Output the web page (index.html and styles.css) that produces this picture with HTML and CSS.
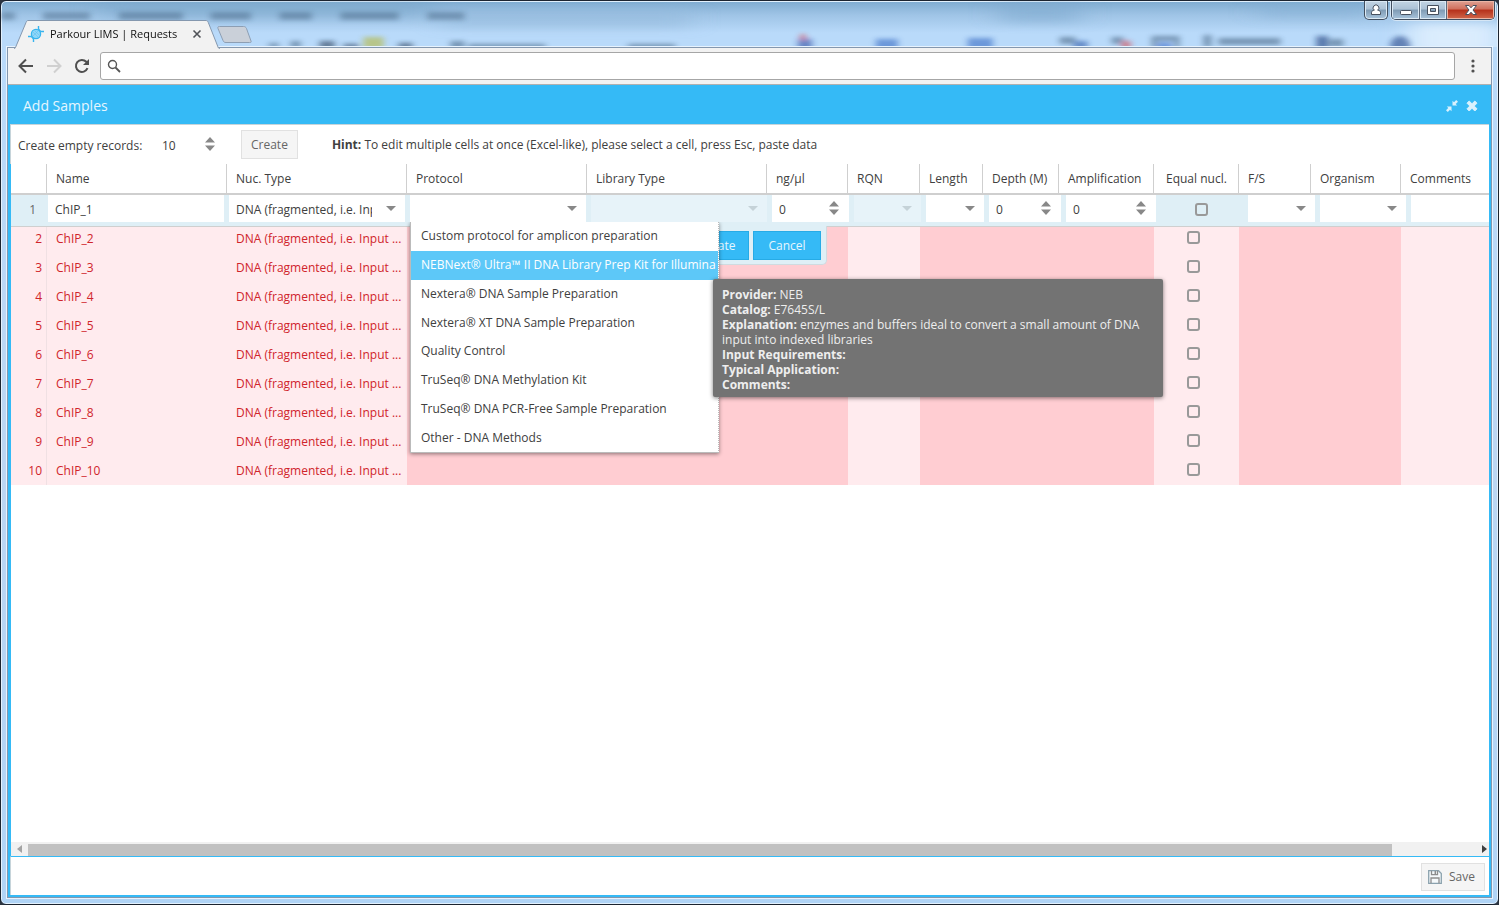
FILE: index.html
```html
<!DOCTYPE html>
<html lang="en">
<head>
<meta charset="utf-8">
<title>Parkour LIMS | Requests</title>
<link rel="stylesheet" href="styles.css">
</head>
<body>
<div class="window">
  <svg class="glass" viewBox="0 0 1499 47" preserveAspectRatio="xMinYMin slice" aria-hidden="true">
    <defs><filter id="soft" x="-5%" y="-50%" width="110%" height="200%"><feGaussianBlur stdDeviation="3 2"/></filter>
    <filter id="wide" x="-5%" y="-50%" width="110%" height="200%"><feGaussianBlur stdDeviation="14 5"/></filter></defs>
    <g filter="url(#wide)">
      <rect x="100" y="0" width="330" height="18" fill="#7aa3c8" opacity=".45"/>
      <rect x="440" y="8" width="250" height="20" fill="#8fb3d6" opacity=".4"/>
      <rect x="1000" y="2" width="80" height="20" fill="#7ba8cd" opacity=".5"/>
      <rect x="1260" y="4" width="110" height="14" fill="#7ba8cd" opacity=".35"/>
      <rect x="1410" y="22" width="90" height="30" fill="#e4f1fe" opacity=".8"/>
    </g>
    <g filter="url(#soft)" fill="#42617f" opacity=".55">
      <g opacity=".8"><rect x="0" y="11" width="14" height="8"/><rect x="42" y="11" width="47" height="8"/><rect x="118" y="11" width="64" height="8"/><rect x="210" y="11" width="40" height="8"/><rect x="279" y="11" width="32" height="8"/><rect x="340" y="11" width="58" height="8"/><rect x="427" y="11" width="37" height="8"/></g>
      <rect x="268" y="42" width="10" height="5"/><rect x="290" y="40" width="10" height="7"/><rect x="319" y="40" width="15" height="8" fill="#1c2f48"/><rect x="343" y="43" width="15" height="5" fill="#1c2f48"/><rect x="363" y="36" width="20" height="12" fill="#b5b42e"/><rect x="398" y="42" width="14" height="6" fill="#1c2f48"/>
      <rect x="450" y="40" width="14" height="8"/><rect x="468" y="43" width="77" height="6"/><rect x="628" y="43" width="47" height="6"/>
      <rect x="798" y="38" width="14" height="12" fill="#25429a"/><circle cx="803" cy="36" r="3" fill="#e03030"/><rect x="876" y="38" width="22" height="12" fill="#2f63c0"/><rect x="968" y="37" width="25" height="12" fill="#2f63c0"/>
      <rect x="1060" y="36" width="16" height="7"/><rect x="1074" y="40" width="14" height="8" fill="#224da0"/><rect x="1112" y="36" width="12" height="7"/><rect x="1122" y="40" width="9" height="8" fill="#dc3030"/><path d="M1152 35h28v12h-5v-7h-18v7h-5z"/><rect x="1158" y="42" width="14" height="6" fill="#2454c0"/>
      <rect x="1204" y="34" width="8" height="12"/><rect x="1219" y="37" width="62" height="7"/><rect x="1317" y="35" width="12" height="13" fill="#102e70"/><rect x="1330" y="38" width="14" height="8"/><circle cx="1401" cy="45" r="10" fill="#14377f"/>
    </g>
  </svg>

  <header class="titlebar">
    <div class="tab">
      <svg class="tab-shape" viewBox="0 0 206 29" aria-hidden="true"><path d="M0 28.500c1 0 1 0 1.500-1L12 2.500c1-2 1-2 3-2h176c2 0 2.500 0 3.300 2L204 27c.5 1.500 1 1.500 2 1.500" fill="#f2f2f2" stroke="#8497ae"/></svg>
      <svg class="favicon" viewBox="0 0 16 16" aria-hidden="true"><circle cx="8" cy="8" r="4.600" fill="#8fd6f8" stroke="#37b4ee" stroke-width="1.300"/><path d="M0 10.500h3l2 1.500M16 5.500h-3l-2-1.500M10.500 0v3l1.500 2M5.500 16v-3L4 11" fill="none" stroke="#37b4ee" stroke-width="1.400"/><path d="M5 6l5 5M6.500 4.500l5 5M5 10l5-5" stroke="#5fc3f2" stroke-width=".6"/></svg>
      <span class="tab-title">Parkour LIMS | Requests</span>
      <button class="tab-close" aria-label="Close tab"><svg viewBox="0 0 10 10"><path d="M1.500 1.500l7 7M8.500 1.500l-7 7" stroke="#505358" stroke-width="1.600"/></svg></button>
    </div>
    <button class="new-tab" aria-label="New tab"><svg viewBox="0 0 35 18"><path d="M1 2.500c-.5-1.500 0-2 1.500-2h24c1.500 0 2.300.5 3 2l4.500 12.500c.5 1.500 0 1.500-1.500 1.500H9c-1.500 0-2.500-.5-3-2z" fill="#cad0d9" stroke="#8d9eb3"/></svg></button>
    <div class="controls">
      <button class="ctl user" aria-label="User"><svg viewBox="0 0 14 12"><path d="M2.500 10.500V8.300C2.500 7 4 6.500 5.300 6.200a2.900 2.900 0 1 1 3.400 0C10 6.500 11.500 7 11.500 8.300v2.200z"/></svg></button>
      <div class="ctl-group">
        <button class="ctl min" aria-label="Minimize"><svg viewBox="0 0 14 12"><rect x="1.500" y="6.500" width="11" height="4" rx="1"/></svg></button>
        <button class="ctl max" aria-label="Maximize"><svg viewBox="0 0 14 12"><path fill-rule="evenodd" d="M1.500 1.500h11v9h-11zM4.500 4.500v3h5v-3z"/></svg></button>
        <button class="ctl shut" aria-label="Close"><svg viewBox="0 0 14 12"><path d="M1.500 1.500h3.500L7 3.800 9 1.500h3.500L9 6l3.500 4.500H9L7 8.200 5 10.500H1.500L5 6z"/></svg></button>
      </div>
    </div>
  </header>

  <div class="browser">
    <nav class="navbar">
      <button class="nav" aria-label="Back"><svg viewBox="0 0 16 16"><path d="M15 8H2M8 1.500L1.500 8 8 14.500" stroke="#505050"/></svg></button>
      <button class="nav" aria-label="Forward"><svg viewBox="0 0 16 16"><path d="M1 8h13M8 1.500L14.500 8 8 14.500" stroke="#d0d0d0"/></svg></button>
      <button class="nav" aria-label="Reload"><svg viewBox="0 0 16 16"><path d="M13.500 10.200A6 6 0 1 1 12.300 3.800L13.500 5" stroke="#505050"/><path d="M15 1v6H9z" fill="#505050" stroke="none"/></svg></button>
      <label class="address"><svg viewBox="0 0 14 14" aria-hidden="true"><circle cx="5.500" cy="5.500" r="4" fill="none" stroke="#555" stroke-width="1.400"/><path d="M8.500 8.500l4.500 4.500" stroke="#555" stroke-width="1.800"/></svg><input type="text" aria-label="Address"></label>
      <button class="menu" aria-label="Menu"><svg viewBox="0 0 4 14"><circle cx="2" cy="2" r="1.600"/><circle cx="2" cy="7" r="1.600"/><circle cx="2" cy="12" r="1.600"/></svg></button>
    </nav>

    <main class="panel">
      <div class="panel-head">
        <h1>Add Samples</h1>
        <button class="tool" aria-label="Restore"><svg viewBox="0 0 12 12"><path d="M6.500 0.800v4.700h4.700L9.700 4l2.300-2.200L10.200 0 8 2.300zM5.500 11.200V6.500H.8L2.300 8 0 10.200 1.800 12 4 9.700z"/></svg></button>
        <button class="tool" aria-label="Close window"><svg viewBox="0 0 12 12"><path d="M3.200 1L6 3.800 8.800 1 11 3.200 8.200 6 11 8.800 8.800 11 6 8.200 3.200 11 1 8.800 3.800 6 1 3.200z" stroke="#d9f1fd" stroke-linejoin="round"/></svg></button>
      </div>

      <div class="toolbar">
        <label for="count">Create empty records:</label>
        <span class="spin count"><input id="count" type="text" value="10"><svg viewBox="0 0 10 14"><path d="M0 5.500L5 0l5 5.500zM0 8.500L5 14l5-5.500z"/></svg></span>
        <button class="btn">Create</button>
        <p class="hint"><b>Hint:</b> To edit multiple cells at once (Excel-like), please select a cell, press Esc, paste data</p>
      </div>

      <div class="grid">
        <table>
          <colgroup><col class="w36"><col class="w180"><col class="w180"><col class="w180"><col class="w180"><col class="w81"><col class="w72"><col class="w63"><col class="w76"><col class="w95"><col class="w85"><col class="w72"><col class="w90"><col></colgroup>
          <thead><tr><th></th><th>Name</th><th>Nuc. Type</th><th>Protocol</th><th>Library Type</th><th>ng/µl</th><th>RQN</th><th>Length</th><th>Depth (M)</th><th>Amplification</th><th class="mid">Equal nucl.</th><th>F/S</th><th>Organism</th><th>Comments</th></tr></thead>
          <tbody>
            <tr class="edit-row"><td colspan="14">
              <div class="editor">
                <span class="rownum">1</span>
                <input class="f180 field" type="text" value="ChIP_1" aria-label="Name">
                <span class="combo f180"><select aria-label="Nuc. Type"><option>DNA (fragmented, i.e. Input DNA)</option></select><svg viewBox="0 0 10 5"><path d="M0 0h10L5 5z"/></svg></span>
                <span class="combo f180"><select aria-label="Protocol"><option></option></select><svg viewBox="0 0 10 5"><path d="M0 0h10L5 5z"/></svg></span>
                <span class="combo f180 off"><select aria-label="Library Type" disabled><option></option></select><svg viewBox="0 0 10 5"><path d="M0 0h10L5 5z"/></svg></span>
                <span class="spin f81"><input type="text" value="0" aria-label="ng/µl"><svg viewBox="0 0 10 14"><path d="M0 5.500L5 0l5 5.500zM0 8.500L5 14l5-5.500z"/></svg></span>
                <span class="combo f72 off"><select aria-label="RQN" disabled><option></option></select><svg viewBox="0 0 10 5"><path d="M0 0h10L5 5z"/></svg></span>
                <span class="combo f63"><select aria-label="Length"><option></option></select><svg viewBox="0 0 10 5"><path d="M0 0h10L5 5z"/></svg></span>
                <span class="spin f76"><input type="text" value="0" aria-label="Depth (M)"><svg viewBox="0 0 10 14"><path d="M0 5.500L5 0l5 5.500zM0 8.500L5 14l5-5.500z"/></svg></span>
                <span class="spin f95"><input type="text" value="0" aria-label="Amplification"><svg viewBox="0 0 10 14"><path d="M0 5.500L5 0l5 5.500zM0 8.500L5 14l5-5.500z"/></svg></span>
                <span class="check f85"><input type="checkbox" aria-label="Equal nucl."></span>
                <span class="combo f72"><select aria-label="F/S"><option></option></select><svg viewBox="0 0 10 5"><path d="M0 0h10L5 5z"/></svg></span>
                <span class="combo f90"><select aria-label="Organism"><option></option></select><svg viewBox="0 0 10 5"><path d="M0 0h10L5 5z"/></svg></span>
                <input class="rest field" type="text" aria-label="Comments">
                <div class="editor-buttons"><button class="blue">Update</button><button class="blue">Cancel</button></div>
                <ul class="options" role="listbox" aria-label="Protocol">
                  <li role="option">Custom protocol for amplicon preparation</li>
                  <li role="option" class="on" aria-selected="true">NEBNext® Ultra™ II DNA Library Prep Kit for Illumina</li>
                  <li role="option">Nextera® DNA Sample Preparation</li>
                  <li role="option">Nextera® XT DNA Sample Preparation</li>
                  <li role="option">Quality Control</li>
                  <li role="option">TruSeq® DNA Methylation Kit</li>
                  <li role="option">TruSeq® DNA PCR-Free Sample Preparation</li>
                  <li role="option">Other - DNA Methods</li>
                </ul>
                <div class="tooltip" role="tooltip"><b>Provider:</b> NEB<br><b>Catalog:</b> E7645S/L<br><b>Explanation:</b> enzymes and buffers ideal to convert a small amount of DNA input into indexed libraries<br><b>Input Requirements:</b><br><b>Typical Application:</b><br><b>Comments:</b></div>
              </div>
            </td></tr>
            <tr class="bad"><td>2</td><td>ChIP_2</td><td>DNA (fragmented, i.e. Input ...</td><td></td><td></td><td></td><td></td><td></td><td></td><td></td><td><input type="checkbox" aria-label="Equal nucl. 2"></td><td></td><td></td><td></td></tr>
            <tr class="bad"><td>3</td><td>ChIP_3</td><td>DNA (fragmented, i.e. Input ...</td><td></td><td></td><td></td><td></td><td></td><td></td><td></td><td><input type="checkbox" aria-label="Equal nucl. 3"></td><td></td><td></td><td></td></tr>
            <tr class="bad"><td>4</td><td>ChIP_4</td><td>DNA (fragmented, i.e. Input ...</td><td></td><td></td><td></td><td></td><td></td><td></td><td></td><td><input type="checkbox" aria-label="Equal nucl. 4"></td><td></td><td></td><td></td></tr>
            <tr class="bad"><td>5</td><td>ChIP_5</td><td>DNA (fragmented, i.e. Input ...</td><td></td><td></td><td></td><td></td><td></td><td></td><td></td><td><input type="checkbox" aria-label="Equal nucl. 5"></td><td></td><td></td><td></td></tr>
            <tr class="bad"><td>6</td><td>ChIP_6</td><td>DNA (fragmented, i.e. Input ...</td><td></td><td></td><td></td><td></td><td></td><td></td><td></td><td><input type="checkbox" aria-label="Equal nucl. 6"></td><td></td><td></td><td></td></tr>
            <tr class="bad"><td>7</td><td>ChIP_7</td><td>DNA (fragmented, i.e. Input ...</td><td></td><td></td><td></td><td></td><td></td><td></td><td></td><td><input type="checkbox" aria-label="Equal nucl. 7"></td><td></td><td></td><td></td></tr>
            <tr class="bad"><td>8</td><td>ChIP_8</td><td>DNA (fragmented, i.e. Input ...</td><td></td><td></td><td></td><td></td><td></td><td></td><td></td><td><input type="checkbox" aria-label="Equal nucl. 8"></td><td></td><td></td><td></td></tr>
            <tr class="bad"><td>9</td><td>ChIP_9</td><td>DNA (fragmented, i.e. Input ...</td><td></td><td></td><td></td><td></td><td></td><td></td><td></td><td><input type="checkbox" aria-label="Equal nucl. 9"></td><td></td><td></td><td></td></tr>
            <tr class="bad"><td>10</td><td>ChIP_10</td><td>DNA (fragmented, i.e. Input ...</td><td></td><td></td><td></td><td></td><td></td><td></td><td></td><td><input type="checkbox" aria-label="Equal nucl. 10"></td><td></td><td></td><td></td></tr>
          </tbody>
        </table>
      </div>

      <div class="scrollbar" aria-hidden="true">
        <svg viewBox="0 0 5 8"><path d="M5 0v8L0 4z" fill="#a3a3a3"/></svg>
        <div class="track"><div class="thumb"></div></div>
        <svg viewBox="0 0 5 8"><path d="M0 0v8l5-4z" fill="#404040"/></svg>
      </div>
      <footer class="footer"><button class="btn save"><svg viewBox="0 0 14 14" aria-hidden="true"><path d="M.7.7h9.800l2.800 2.800v9.800H.7z" fill="#f5f9fb" stroke="#8ba2ae" stroke-width="1.300"/><path d="M3.500.7v4h6v-4M3 13.300V8h8v5.300" fill="none" stroke="#8d8d8d" stroke-width="1.300"/><path d="M7.300 1v3" stroke="#8d8d8d" stroke-width="1.500"/></svg>Save</button></footer>
    </main>
  </div>
</div>
</body>
</html>
```
FILE: styles.css
```css
* { box-sizing: border-box; }
body { margin: 0; background: #2c3440; font: 12px/16px "Open Sans", "Noto Sans", sans-serif; color: #404040; }
button, input, select { font: inherit; color: inherit; margin: 0; padding: 0; border: 0; border-radius: 0; background: none; outline: 0; }
button { display: flex; align-items: center; justify-content: center; }
svg { display: block; flex: none; }

.window { position: relative; display: flex; flex-direction: column; height: 100vh; padding: 0 6px 6px; overflow: hidden; border: 1px solid #1c2430; border-radius: 6px; background: linear-gradient(#7eabd0, #9fc4e6 14px, #b9dafa 32px, #b9dafa 48px, #bcd6f2 50%, #b0d4f6); box-shadow: inset 0 0 0 1px #e3f1fd; }
.glass { position: absolute; left: 0; top: 0; width: 100%; height: 46px; }
.titlebar { position: relative; z-index: 2; display: flex; align-items: flex-end; height: 46px; flex: none; padding-left: 7px; }
.tab { position: relative; display: flex; align-items: center; width: 206px; height: 28px; padding: 0 18px 0 14px; margin-bottom: -1px; color: #111; }
.tab-shape { position: absolute; left: 0; top: 0; width: 206px; height: 29px; }
.favicon, .tab-title, .tab-close { position: relative; }
.favicon { width: 16px; height: 16px; margin-right: 6px; }
.tab-title { flex: 1; white-space: nowrap; font-size: 11px; }
.tab-close svg { width: 10px; height: 10px; }
.new-tab { margin-bottom: 3px; margin-left: -3px; }
.new-tab svg { width: 35px; height: 18px; }
.controls { display: flex; align-self: flex-start; margin-left: auto; margin-right: -3px; gap: 3px; }
.ctl-group { display: flex; border: 1px solid #414e5f; border-top: 0; border-radius: 0 0 5px 5px; overflow: hidden; box-shadow: 0 0 0 1px #d5e6f5; }
.ctl { height: 18px; background: linear-gradient(#c2d4e4, #abc1d5 45%, #7f9bb4 50%, #a8c4dc); box-shadow: inset 0 0 0 1px #dbe9f4; }
.ctl svg { width: 14px; height: 12px; fill: #fff; stroke: #47505e; }
.user { width: 24px; height: 19px; border: 1px solid #414e5f; border-top: 0; border-radius: 0 0 5px 5px; }
.min { width: 28px; border-right: 1px solid #5b6a7c; }
.max { width: 27px; border-right: 1px solid #5b6a7c; }
.shut { width: 47px; background: linear-gradient(#dfa193, #cf6f5c 45%, #b5301a 50%, #d0674a); box-shadow: inset 0 0 0 1px #eab5a5; }

.browser { position: relative; display: flex; flex-direction: column; flex: 1; min-height: 0; border: 1px solid #8497ae; box-shadow: 0 0 0 1px #e7f3fe; }
.navbar { display: flex; align-items: center; height: 37px; flex: none; padding: 0 16px 0 10px; background: #f2f2f2; border-bottom: 1px solid #b0b0b0; }
.nav { width: 16px; height: 16px; margin-right: 12px; }
.nav svg { width: 16px; height: 16px; fill: none; stroke-width: 2; }
.address { display: flex; align-items: center; flex: 1; height: 28px; padding: 0 6px; margin-left: -2px; border: 1px solid #a6a6a6; border-radius: 3px; background: #fff; }
.address svg { width: 14px; height: 14px; }
.address input { flex: 1; padding-left: 8px; }
.menu { margin-left: 16px; }
.menu svg { width: 4px; height: 14px; fill: #505050; }

.panel { display: flex; flex-direction: column; flex: 1; min-height: 0; border: 2px solid #35baf6; border-top: 0; background: #fff; box-shadow: inset 1px 0 #35baf6; }
.panel-head { display: flex; align-items: center; gap: 8px; height: 40px; flex: none; padding: 3px 11px 0 13px; background: #35baf6; border-bottom: 1px solid #c6d4da; }
.panel-head h1 { flex: 1; margin: 0; font-size: 14px; line-height: 20px; font-weight: 400; color: #e6f6fe; }
.tool svg { width: 12px; height: 12px; fill: #d9f1fd; }
.toolbar { display: flex; align-items: center; height: 39px; flex: none; padding: 0 7px; border-left: 1px solid #c6d4da; }
.toolbar label { width: 135px; padding-top: 3px; white-space: nowrap; }
.spin, .combo { position: relative; display: flex; height: 27px; background: #fff; flex: none; }
.spin input { width: 100%; padding: 2px 24px 0 7px; }
.spin svg { position: absolute; right: 10px; top: 6px; width: 10px; height: 14px; fill: #888; }
.count { width: 72px; margin-right: 16px; }
.count input { padding-left: 9px; }
.btn { height: 29px; padding: 0 9px; border: 1px solid #e1e1e1; background: #f5f5f5; color: #666; }
.hint { margin: 0; padding-left: 34px; padding-top: 1px; white-space: nowrap; }

.grid { flex: 1; min-height: 0; overflow: hidden; padding-left: 1px; }
table { width: 100%; table-layout: fixed; border-collapse: separate; border-spacing: 0; }
.w36 { width: 36px; } .w180 { width: 180px; } .w81 { width: 81px; } .w72 { width: 72px; } .w63 { width: 63px; } .w76 { width: 76px; } .w95 { width: 95px; } .w85 { width: 85px; } .w90 { width: 90px; }
th { height: 31px; padding: 0 0 0 9px; border-right: 1px solid #cfcfcf; border-bottom: 2px solid #cfcfcf; font-weight: 400; text-align: left; white-space: nowrap; }
th:last-child { border-right: 0; }
th.mid { padding-left: 12px; }
td { height: 29px; padding: 0 0 0 9px; white-space: nowrap; background: #ffcdd2; }
.bad { color: #d0242b; }
.bad td:nth-child(-n+3), .bad td:nth-child(7), .bad td:nth-child(11), .bad td:nth-child(14) { background: #ffebee; }
.bad td:first-child { padding: 0 4px 0 0; text-align: right; border-right: 1px solid #f0e0e3; }
.bad td:nth-child(11) { padding: 0 6px 2px 0; }
input[type="checkbox"] { display: block; appearance: none; width: 13px; height: 13px; margin: 0 auto; border: 2px solid #999; border-radius: 3px; background: transparent; }

.edit-row td { padding: 0; background: #dfeff6; }
.editor { position: relative; z-index: 1; display: flex; gap: 5px; height: 32px; margin-bottom: -3px; background: #dfeff6; border-bottom: 1px solid #cfcfcf; }
.rownum { width: 32px; padding-top: 7px; padding-right: 7px; text-align: right; color: #666; flex: none; }
.field { height: 27px; padding: 2px 7px 0; background: #fff; flex: none; }
.f180 { width: 176px; } .f81 { width: 77px; } .f72 { width: 67px; } .f63 { width: 58px; } .f76 { width: 72px; } .f95 { width: 90px; } .f85 { width: 82px; } .f90 { width: 86px; }
.editor .rest { flex: 1; width: 0; }
.combo select { appearance: none; width: 100%; margin-right: 33px; padding: 2px 0 0 7px; overflow: hidden; opacity: 1; }
.combo svg { position: absolute; right: 9px; top: 11px; width: 10px; height: 5px; fill: #888; }
.off { background: #e7f3f9; }
.off svg { fill: #c5d2d8; }
.check { padding-top: 8px; padding-right: 2px; flex: none; }
.editor-buttons { position: absolute; left: 664px; top: 31px; display: flex; gap: 4px; padding: 5px 5px 4px; background: #dfeff6; border: 1px solid #cfdbe0; border-top: 0; border-radius: 0 0 5px 5px; }
.blue { width: 68px; height: 29px; border: 1px solid #27abe6; background: #35baf6; color: #e6f6fe; }
.options { position: absolute; left: 399px; top: 27px; display: grid; grid-template-rows: repeat(8, 1fr); width: 309px; height: 231px; margin: 0; padding: 0; list-style: none; background: #fff; border: solid #bbb; border-width: 0 1px 1px; border-right-style: dotted; box-shadow: 0 1px 4px rgba(0, 0, 0, .45); clip-path: inset(0 -8px -8px -8px); }
.options li { display: flex; align-items: center; padding-left: 10px; white-space: nowrap; }
.options .on { background: #5dc8f8; color: #fff; }
.tooltip { position: absolute; left: 702px; top: 84px; width: 450px; padding: 8px 9px 5px; line-height: 15px; color: #eee; background: #737373; border-radius: 2px; box-shadow: 0 1px 4px rgba(0, 0, 0, .5); white-space: normal; }

.scrollbar { display: flex; align-items: center; gap: 6px; height: 14px; flex: none; margin-left: 1px; padding: 0 2px 0 6px; background: #f1f1f1; }
.scrollbar svg { width: 5px; height: 8px; }
.track { flex: 1; align-self: stretch; padding-top: 2px; }
.thumb { width: 94.2%; height: 12px; background: #c1c1c1; }
.footer { display: flex; justify-content: flex-end; align-items: center; height: 39px; flex: none; padding: 1px 4px 0; border-top: 1px solid #35baf6; border-left: 1px solid #c6d4da; }
.save { height: 28px; gap: 7px; padding: 0 9px 0 6px; }
.save svg { width: 14px; height: 14px; }
```
